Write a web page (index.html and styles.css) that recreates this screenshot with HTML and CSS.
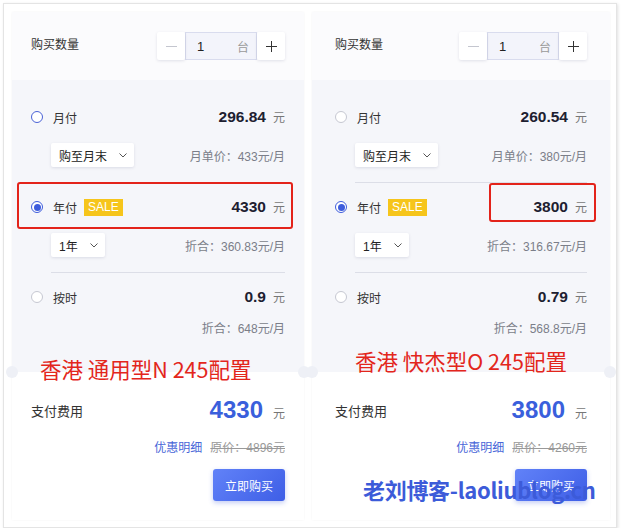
FILE: index.html
```html
<!doctype html>
<html lang="zh-CN">
    <head>
        <meta charset="UTF-8" />
        <meta name="viewport" content="width=device-width, initial-scale=1.0" />
        <title>购买配置对比</title>
        <link rel="stylesheet" href="styles.css">
    </head>
    <body>
        <div class="frame">
            <!-- 左侧：通用型N -->
            <div class="panel panel-left">
                <div class="qty">
                    <span class="qty-label">购买数量</span>
                    <div class="stepper">
                        <span class="step-btn minus"></span>
                        <div class="step-input"><span>1</span><span class="unit">台</span></div>
                        <span class="step-btn plus"></span>
                    </div>
                </div>

                <div class="plans">
                    <div class="plan-row">
                        <span class="radio outline"></span>
                        <span class="plan-name">月付</span>
                        <span class="price"><b>296.84</b><i>元</i></span>
                    </div>
                    <div class="plan-sub">
                        <span class="select">购至月末 <svg width="8" height="5" viewBox="0 0 8 5"><path d="M0.5 0.5 L4 4 L7.5 0.5" fill="none" stroke="#555" stroke-width="1"/></svg></span>
                        <span class="note">月单价：433元/月</span>
                    </div>
                    <div class="divider"></div>

                    <div class="plan-row">
                        <span class="radio checked"></span>
                        <span class="plan-name">年付</span>
                        <span class="sale">SALE</span>
                        <span class="price"><b>4330</b><i>元</i></span>
                    </div>
                    <div class="plan-sub">
                        <span class="select">1年 <svg width="8" height="5" viewBox="0 0 8 5"><path d="M0.5 0.5 L4 4 L7.5 0.5" fill="none" stroke="#555" stroke-width="1"/></svg></span>
                        <span class="note">折合：360.83元/月</span>
                    </div>
                    <div class="divider"></div>

                    <div class="plan-row">
                        <span class="radio"></span>
                        <span class="plan-name">按时</span>
                        <span class="price"><b>0.9</b><i>元</i></span>
                    </div>
                    <div class="plan-sub compact">
                        <span class="note">折合：648元/月</span>
                    </div>
                </div>

                <div class="pay">
                    <div class="pay-total">
                        <span class="pay-label">支付费用</span>
                        <span class="pay-amount"><b>4330</b><i>元</i></span>
                    </div>
                    <div class="pay-detail">
                        <a href="#">优惠明细</a>
                        <span class="orig">原价：4896元</span>
                    </div>
                    <button class="buy">立即购买</button>
                </div>

                <div class="mark-box mark-left"></div>
                <div class="caption caption-left">香港 通用型N 245配置</div>
            </div>

            <!-- 右侧：快杰型O -->
            <div class="panel panel-right">
                <div class="qty">
                    <span class="qty-label">购买数量</span>
                    <div class="stepper">
                        <span class="step-btn minus"></span>
                        <div class="step-input"><span>1</span><span class="unit">台</span></div>
                        <span class="step-btn plus"></span>
                    </div>
                </div>

                <div class="plans">
                    <div class="plan-row">
                        <span class="radio"></span>
                        <span class="plan-name">月付</span>
                        <span class="price"><b>260.54</b><i>元</i></span>
                    </div>
                    <div class="plan-sub">
                        <span class="select">购至月末 <svg width="8" height="5" viewBox="0 0 8 5"><path d="M0.5 0.5 L4 4 L7.5 0.5" fill="none" stroke="#555" stroke-width="1"/></svg></span>
                        <span class="note">月单价：380元/月</span>
                    </div>
                    <div class="divider"></div>

                    <div class="plan-row">
                        <span class="radio checked"></span>
                        <span class="plan-name">年付</span>
                        <span class="sale">SALE</span>
                        <span class="price"><b>3800</b><i>元</i></span>
                    </div>
                    <div class="plan-sub">
                        <span class="select">1年 <svg width="8" height="5" viewBox="0 0 8 5"><path d="M0.5 0.5 L4 4 L7.5 0.5" fill="none" stroke="#555" stroke-width="1"/></svg></span>
                        <span class="note">折合：316.67元/月</span>
                    </div>
                    <div class="divider"></div>

                    <div class="plan-row">
                        <span class="radio"></span>
                        <span class="plan-name">按时</span>
                        <span class="price"><b>0.79</b><i>元</i></span>
                    </div>
                    <div class="plan-sub compact">
                        <span class="note">折合：568.8元/月</span>
                    </div>
                </div>

                <div class="pay">
                    <div class="pay-total">
                        <span class="pay-label">支付费用</span>
                        <span class="pay-amount"><b>3800</b><i>元</i></span>
                    </div>
                    <div class="pay-detail">
                        <a href="#">优惠明细</a>
                        <span class="orig">原价：4260元</span>
                    </div>
                    <button class="buy">立即购买</button>
                </div>

                <div class="mark-box mark-right"></div>
                <div class="caption caption-right">香港 快杰型O 245配置</div>
                <div class="watermark">老刘博客-laoliublog.cn</div>
            </div>
        </div>
    </body>
</html>
```

FILE: styles.css
```css
body {
    margin: 0;
    background: #fff;
    color: #333;
    font-family: "Liberation Sans", "Noto Sans CJK SC", sans-serif;
}

.frame {
    margin: 3px 0 0 3px;
    width: 614px;
    height: 525px;
    box-sizing: border-box;
    border: 1px solid #e4e4e4;
    box-shadow: 1px 1px 3px rgba(0, 0, 0, 0.12);
    display: flex;
    align-items: flex-start;
    gap: 8px;
    padding: 8px 0 0 8px;
}

.panel {
    position: relative;
    background: #fff;
    box-shadow: 0 0 2px rgba(0, 0, 0, 0.05);
}

.panel-left {
    width: 292px;
    --pad: 19px;
}

.panel-right {
    width: 298px;
    --pad: 23px;
}

/* 购买数量 */
.qty {
    height: 68px;
    background: #fbfbfd;
    display: flex;
    align-items: center;
    justify-content: space-between;
    padding: 0 var(--pad);
}

.qty-label {
    font-size: 12px;
    line-height: 14px;
    margin-top: -3px;
    color: #333;
}

.stepper {
    display: flex;
    height: 28px;
}

.step-btn {
    width: 28px;
    height: 28px;
    background: #fff;
    box-shadow: 0 1px 3px rgba(30, 40, 90, 0.12);
    border-radius: 2px;
    position: relative;
}

.step-btn::before,
.step-btn::after {
    content: "";
    position: absolute;
    left: 50%;
    top: 50%;
    width: 11px;
    height: 1px;
    margin: -0.5px 0 0 -5.5px;
    background: #333;
}

.minus::after {
    display: none;
}

.minus::before {
    background: #c4c6cf;
}

.plus::after {
    transform: rotate(90deg);
}

.step-input {
    width: 72px;
    box-sizing: border-box;
    border: 1px solid #d9dcee;
    background: #f3f4fb;
    display: flex;
    align-items: center;
    justify-content: space-between;
    padding: 0 7px 0 11px;
    font-size: 13px;
    color: #222;
}

.step-input .unit {
    font-size: 12px;
    color: #999;
}

/* 计费方式 */
.plans {
    background: #f5f6fa;
    height: 292px;
    box-sizing: border-box;
    padding: 25px var(--pad) 0;
}

.plan-row {
    display: flex;
    align-items: center;
    height: 24px;
}

.radio {
    width: 12px;
    height: 12px;
    box-sizing: border-box;
    border: 1px solid #c6c8d2;
    border-radius: 50%;
    background: #fff;
    margin-right: 10px;
    position: relative;
}

.radio.outline {
    border-color: #4a62d6;
}

.radio.checked {
    border-color: #3d5cdc;
}

.radio.checked::after {
    content: "";
    position: absolute;
    left: 1.5px;
    top: 1.5px;
    width: 7px;
    height: 7px;
    border-radius: 50%;
    background: #3d5cdc;
}

.plan-name {
    font-size: 12px;
    color: #333;
}

.sale {
    margin-left: 7px;
    background: #f6c51b;
    color: #fff;
    font-size: 12px;
    line-height: 17px;
    padding: 0 4px;
}

.price {
    margin-left: auto;
    display: flex;
    align-items: baseline;
    gap: 7px;
}

.price b {
    font-size: 15.5px;
    color: #1d2030;
}

.price i,
.pay-amount i {
    font-style: normal;
    font-size: 12px;
    color: #777;
}

.plan-sub {
    display: flex;
    align-items: center;
    justify-content: space-between;
    height: 24px;
    margin-top: 14px;
    padding-left: 20px;
}

.plan-sub.compact {
    height: 18px;
    margin-top: 9px;
    justify-content: flex-end;
}

.select {
    height: 24px;
    display: flex;
    align-items: center;
    gap: 12px;
    padding: 0 7px 0 8px;
    background: #fff;
    border-radius: 2px;
    box-shadow: 0 1px 3px rgba(30, 40, 90, 0.12);
    font-size: 12px;
    color: #222;
}

.note {
    font-size: 12px;
    color: #7b7e89;
}

.divider {
    height: 1px;
    background: #dcdee7;
    margin: 15px 0 12px 20px;
}

/* 支付费用 */
.pay {
    position: relative;
    height: 148px;
    box-sizing: border-box;
    padding: 23px var(--pad) 0;
}

.pay::before,
.pay::after {
    content: "";
    position: absolute;
    top: -6px;
    width: 12px;
    height: 12px;
    border-radius: 50%;
    background: #eef0f6;
}

.pay::before {
    left: -6px;
}

.pay::after {
    right: -6px;
}

.pay-total {
    display: flex;
    align-items: center;
    height: 30px;
}

.pay-label {
    font-size: 13px;
    color: #333;
}

.pay-amount {
    margin-left: auto;
    display: flex;
    align-items: baseline;
    gap: 10px;
}

.pay-amount b {
    font-size: 24px;
    color: #3a5fdc;
}

.pay-detail {
    display: flex;
    justify-content: flex-end;
    gap: 8px;
    margin-top: 14px;
    font-size: 12px;
    line-height: 18px;
}

.pay-detail a {
    color: #4866d8;
    text-decoration: none;
}

.orig {
    color: #999;
    text-decoration: line-through;
}

.buy {
    display: block;
    margin: 12px 0 0 auto;
    width: 72px;
    height: 32px;
    border: none;
    border-radius: 3px;
    background: linear-gradient(135deg, #6182f8, #3e5ee6);
    box-shadow: 0 2px 5px rgba(60, 90, 220, 0.3);
    color: #fff;
    font-family: inherit;
    font-size: 12px;
}

/* 标注 */
.mark-box {
    position: absolute;
    border: 2.5px solid #e3231a;
    border-radius: 3px;
}

.mark-left {
    left: 5px;
    top: 170px;
    width: 272px;
    height: 43px;
}

.mark-right {
    left: 177px;
    top: 171px;
    width: 103px;
    height: 35px;
}

.caption {
    position: absolute;
    font-family: "Noto Sans CJK SC", sans-serif;
    font-size: 21.5px;
    line-height: 24px;
    color: #e3261c;
    white-space: nowrap;
}

.caption-left {
    left: 28px;
    top: 345px;
}

.caption-right {
    left: 43px;
    top: 337px;
}

.watermark {
    position: absolute;
    left: 51px;
    top: 462px;
    font-family: "Noto Sans CJK SC", sans-serif;
    font-weight: 700;
    font-size: 22px;
    line-height: 30px;
    letter-spacing: -0.3px;
    color: #3c5bd9;
    white-space: nowrap;
}
```
